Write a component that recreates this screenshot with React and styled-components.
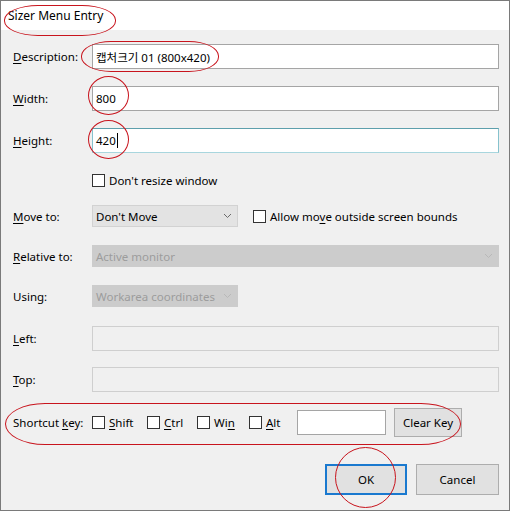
import React from 'react'
import styled, { createGlobalStyle, css } from 'styled-components'

const Global = createGlobalStyle`
	body {
		margin: 0;
		background: #fff;
		font-family: 'Noto Sans', 'Noto Sans CJK KR', sans-serif;
		font-size: 11.5px;
		color: #000;
	}
`

const Window = styled.div`
	position: relative;
	box-sizing: border-box;
	width: 510px;
	height: 511px;
	border: 1px solid #7a7a7a;
	background: #f0f0f0;
	display: flex;
	flex-direction: column;
`

const TitleBar = styled.div`
	height: 29px;
	background: #fff;
	display: flex;
	align-items: center;
	padding-left: 7px;
	font-size: 12px;
`

const Body = styled.div`
	flex: 1;
	display: flex;
	flex-direction: column;
	padding: 14px 10px 0 12px;
`

const Row = styled.div`
	display: grid;
	grid-template-columns: 79px 1fr;
	align-items: center;
	height: ${props => props.$h}px;
	margin-top: ${props => props.$gap || 0}px;
`

const Label = styled.span`
	white-space: nowrap;
`

const Key = styled.span`
	text-decoration: underline;
	text-underline-offset: 2px;
`

const Field = styled.div`
	box-sizing: border-box;
	height: 25px;
	display: flex;
	align-items: center;
	padding-left: 3px;
	background: #fff;
	border: 1px solid #a5a5a5;
	white-space: nowrap;
	overflow: hidden;

	${props =>
		props.$focused &&
		css`
			border-color: #5d9fac #86c2cd #a8d6de #86c2cd;
		`}

	${props =>
		props.$disabled &&
		css`
			background: #f0f0f0;
			border-color: #cfcfcf;
		`}
`

const Caret = styled.span`
	display: inline-block;
	width: 1px;
	height: 15px;
	margin-left: 1px;
	background: #000;
`

const Select = styled.div`
	box-sizing: border-box;
	width: ${props => (props.$w ? `${props.$w}px` : 'auto')};
	height: 22px;
	display: flex;
	align-items: center;
	justify-content: space-between;
	padding: 0 5px 0 3px;
	background: ${props => (props.$disabled ? '#cccccc' : '#e3e3e3')};
	border: 1px solid ${props => (props.$disabled ? '#cccccc' : '#d2d2d2')};
	color: ${props => (props.$disabled ? '#9c9c9c' : '#000')};
	white-space: nowrap;

	svg {
		flex: none;
		stroke: ${props => (props.$disabled ? '#b8b8b8' : '#6a6a6a')};
	}
`

const Chevron = () => (
	<svg width="9" height="6" viewBox="0 0 9 6" fill="none" strokeWidth="1">
		<polyline points="1,1 4.5,4.5 8,1" />
	</svg>
)

const Inline = styled.div`
	display: flex;
	align-items: center;
`

const Check = styled.label`
	display: flex;
	align-items: center;
	gap: 4px;
	width: ${props => (props.$w ? `${props.$w}px` : 'auto')};
	margin-left: ${props => props.$ml || 0}px;
	white-space: nowrap;
	flex: none;
`

const Box = styled.span`
	box-sizing: border-box;
	width: 13px;
	height: 13px;
	flex: none;
	background: #fff;
	border: 1px solid #333;
`

const KeyInput = styled.div`
	box-sizing: border-box;
	width: 89px;
	height: 25px;
	background: #fff;
	border: 1px solid #a5a5a5;
`

const Button = styled.div`
	box-sizing: border-box;
	display: flex;
	align-items: center;
	justify-content: center;
	width: ${props => props.$w}px;
	height: ${props => props.$h}px;
	margin-left: ${props => props.$ml || 0}px;
	background: #e1e1e1;
	border: ${props => (props.$default ? '2px solid #1a79cf' : '1px solid #adadad')};
	flex: none;
`

const Buttons = styled.div`
	display: flex;
	justify-content: flex-end;
	margin-top: 27px;
	height: 31px;
`

// red hand-drawn marks laid over the dialog
const Ring = styled.span`
	position: absolute;
	box-sizing: border-box;
	left: ${props => props.$x}px;
	top: ${props => props.$y}px;
	width: ${props => props.$w}px;
	height: ${props => props.$h}px;
	border: 1.5px solid #c8141d;
	border-radius: ${props => props.$r || '50%'};
	pointer-events: none;
`

const App = () => (
	<>
		<Global />
		<Window>
			<TitleBar>Sizer Menu Entry</TitleBar>
			<Body>
				<Row $h={25}>
					<Label>
						<Key>D</Key>escription:
					</Label>
					<Field>캡처크기 01 (800x420)</Field>
				</Row>
				<Row $h={25} $gap={17}>
					<Label>
						<Key>W</Key>idth:
					</Label>
					<Field>800</Field>
				</Row>
				<Row $h={25} $gap={17}>
					<Label>
						<Key>H</Key>eight:
					</Label>
					<Field $focused>
						420
						<Caret />
					</Field>
				</Row>
				<Row $h={14} $gap={20}>
					<span />
					<Check>
						<Box />
						Don't resize window
					</Check>
				</Row>
				<Row $h={22} $gap={18}>
					<Label>
						<Key>M</Key>ove to:
					</Label>
					<Inline>
						<Select $w={146}>
							Don't Move
							<Chevron />
						</Select>
						<Check $ml={15}>
							<Box />
							<span>
								Allow mo<Key>v</Key>e outside screen bounds
							</span>
						</Check>
					</Inline>
				</Row>
				<Row $h={22} $gap={18}>
					<Label>
						<Key>R</Key>elative to:
					</Label>
					<Select $disabled>
						Active monitor
						<Chevron />
					</Select>
				</Row>
				<Row $h={22} $gap={18}>
					<Label>Using:</Label>
					<Select $w={146} $disabled>
						Workarea coordinates
						<Chevron />
					</Select>
				</Row>
				<Row $h={25} $gap={19}>
					<Label>
						<Key>L</Key>eft:
					</Label>
					<Field $disabled />
				</Row>
				<Row $h={25} $gap={16}>
					<Label>
						<Key>T</Key>op:
					</Label>
					<Field $disabled />
				</Row>
				<Row $h={29} $gap={16}>
					<Label>
						Shortcut <Key>k</Key>ey:
					</Label>
					<Inline>
						<Check $w={55}>
							<Box />
							<span>
								<Key>S</Key>hift
							</span>
						</Check>
						<Check $w={50}>
							<Box />
							<span>
								<Key>C</Key>trl
							</span>
						</Check>
						<Check $w={52}>
							<Box />
							<span>
								Wi<Key>n</Key>
							</span>
						</Check>
						<Check $w={48}>
							<Box />
							<span>
								<Key>A</Key>lt
							</span>
						</Check>
						<KeyInput />
						<Button $w={68} $h={29} $ml={8}>
							Clear Key
						</Button>
					</Inline>
				</Row>
				<Buttons>
					<Button $w={82} $h={31} $default>
						OK
					</Button>
					<Button $w={83} $h={31} $ml={9}>
						Cancel
					</Button>
				</Buttons>
			</Body>

			<Ring $x={3} $y={4} $w={112} $h={31} $r="34px / 15px" />
			<Ring $x={80} $y={40} $w={138} $h={31} $r="30px / 15px" />
			<Ring $x={87} $y={75} $w={41} $h={39} />
			<Ring $x={87} $y={119} $w={41} $h={39} />
			<Ring $x={4} $y={402} $w={456} $h={42} $r="40px / 21px" />
			<Ring $x={334} $y={446} $w={61} $h={61} />
		</Window>
	</>
)

export default App
